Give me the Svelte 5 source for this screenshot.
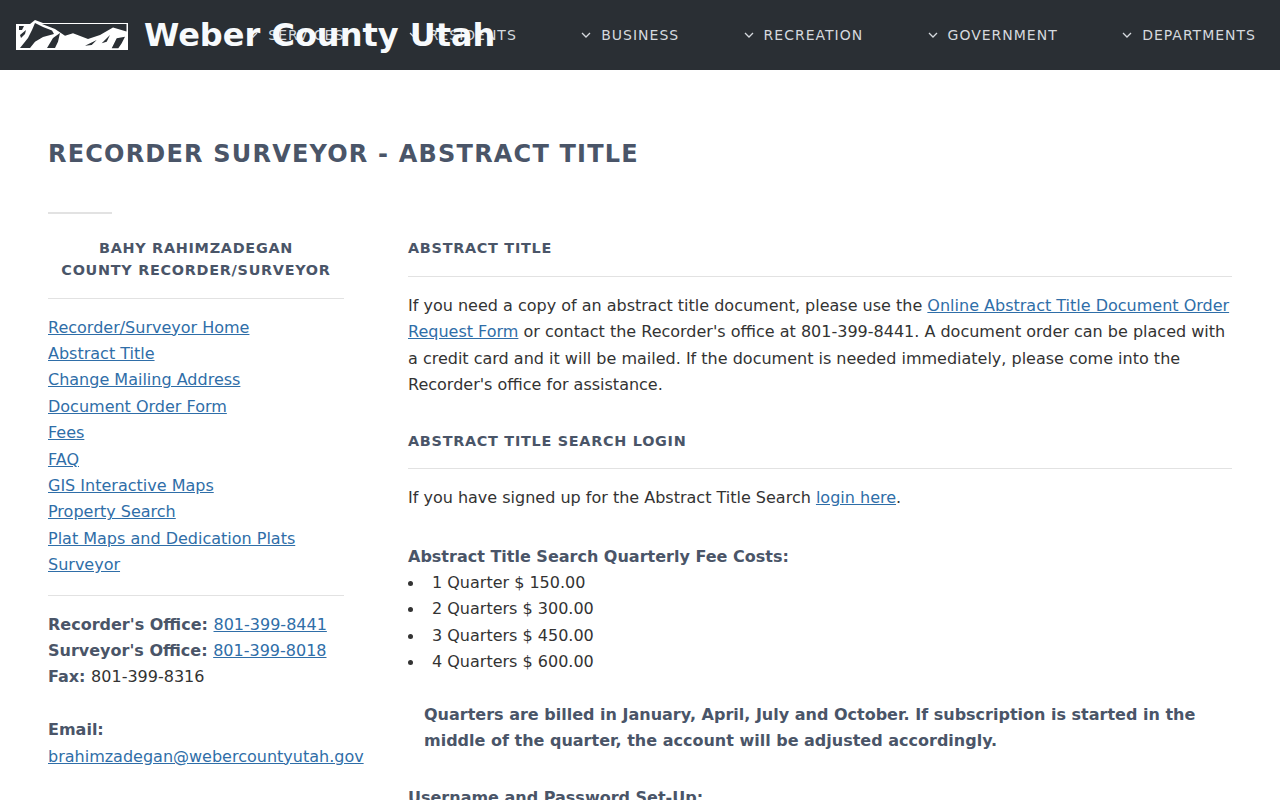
<script>
  const navItems = ["Services", "Residents", "Business", "Recreation", "Government", "Departments"];
  const sideLinks = [
    "Recorder/Surveyor Home",
    "Abstract Title",
    "Change Mailing Address",
    "Document Order Form",
    "Fees",
    "FAQ",
    "GIS Interactive Maps",
    "Property Search",
    "Plat Maps and Dedication Plats",
    "Surveyor"
  ];
  const fees = ["1 Quarter $ 150.00", "2 Quarters $ 300.00", "3 Quarters $ 450.00", "4 Quarters $ 600.00"];
</script>

<header class="topbar">
  <a class="brand" href="#top">
    <svg class="logo" viewBox="0 0 112 30" width="112" height="30" aria-hidden="true">
      <path fill="#fff" d="M0 4H14L19 0L27 3H112V30H0Z" />
      <path fill="#2a2f34" d="M26 4H110.5V11.5L97 7.5L84 15L72 19L57 13.3L49 15.7L39 9Z" />
      <path fill="#2a2f34" d="M4 28L12 18L16 10L19 3L27 7L36 10.5L38 14L27 17L19 21.7L14 28ZM31 28L37 18L44 13L42 21.7L39 28ZM3 6H8L6 10H3ZM4 15L10 10L9 14L5 18ZM69 25.7L80.7 20L75.7 25ZM85.7 23.3L94 15L90.7 21.7ZM95.7 28.3L100.7 18.3L109 16.7L105.7 23.3L102.3 28.3Z" />
    </svg>
    <span class="brand-name">Weber County Utah</span>
  </a>
  <nav class="mainnav">
    {#each navItems as item}
      <a class="navlink" href="#top">
        <svg class="chev" viewBox="0 0 10 6" width="10" height="6" aria-hidden="true">
          <path d="M1 1l4 4 4-4" fill="none" stroke="currentColor" stroke-width="1.3" />
        </svg>
        {item}
      </a>
    {/each}
  </nav>
</header>

<main class="page">
  <h1>Recorder Surveyor - Abstract Title</h1>
  <hr class="short" />

  <div class="columns">
    <aside class="side">
      <h4 class="person">Bahy Rahimzadegan<br />County Recorder/Surveyor</h4>
      <hr class="rule side-top" />
      <ul class="sidelinks">
        {#each sideLinks as link}
          <li><a href="#top">{link}</a></li>
        {/each}
      </ul>
      <hr class="rule side-bottom" />
      <p class="contact">
        <strong>Recorder's Office:</strong> <a href="#top">801-399-8441</a><br />
        <strong>Surveyor's Office:</strong> <a href="#top">801-399-8018</a><br />
        <strong>Fax:</strong> 801-399-8316
      </p>
      <p class="contact">
        <strong>Email:</strong><br />
        <a href="#top">brahimzadegan@webercountyutah.gov</a>
      </p>
    </aside>

    <article class="content">
      <h4>Abstract Title</h4>
      <hr class="rule" />
      <p>If you need a copy of an abstract title document, please use the <a href="#top">Online Abstract Title Document Order Request Form</a> or contact the Recorder's office at 801-399-8441. A document order can be placed with a credit card and it will be mailed. If the document is needed immediately, please come into the Recorder's office for assistance.</p>

      <h4 class="next">Abstract Title Search Login</h4>
      <hr class="rule tight" />
      <p>If you have signed up for the Abstract Title Search <a href="#top">login here</a>.</p>

      <p class="feehead"><strong>Abstract Title Search Quarterly Fee Costs:</strong></p>
      <ul class="fees">
        {#each fees as fee}
          <li>{fee}</li>
        {/each}
      </ul>

      <p class="note">Quarters are billed in January, April, July and October. If subscription is started in the middle of the quarter, the account will be adjusted accordingly.</p>

      <p class="feehead setup"><strong>Username and Password Set-Up:</strong></p>
    </article>
  </div>
</main>

<style>
  :global(body) {
    margin: 0;
    background: #fff;
    color: #333;
    font-family: "DejaVu Sans", sans-serif;
    font-size: 16px;
    line-height: 26.4px;
    overflow: hidden;
  }

  .topbar {
    position: relative;
    height: 70px;
    background: #2a2f34;
    display: flex;
    justify-content: flex-end;
    align-items: center;
    padding-right: 24px;
  }

  /* the title runs over the nav in the original too */
  .brand {
    position: absolute;
    left: 16px;
    top: 0;
    height: 70px;
    display: flex;
    align-items: center;
    gap: 16px;
    color: #f7fafc;
    text-decoration: none;
  }
  .logo {
    display: block;
  }
  .brand-name {
    font-size: 32px;
    font-weight: 700;
    line-height: 70px;
  }

  .mainnav {
    display: flex;
    gap: 64.4px;
  }
  .navlink {
    display: flex;
    align-items: center;
    gap: 10px;
    color: #d5d9de;
    text-decoration: none;
    text-transform: uppercase;
    font-size: 14px;
    letter-spacing: 1px;
  }
  .chev {
    color: #d5d9de;
  }

  .page {
    padding: 0 48px;
  }

  h1 {
    margin: 0;
    padding-top: 67px;
    color: #4a5568;
    font-size: 24px;
    line-height: 34px;
    font-weight: 700;
    letter-spacing: 1.2px;
    text-transform: uppercase;
  }

  hr {
    border: 0;
    margin: 0;
    height: 1px;
    background: #e2e2e2;
  }
  .short {
    width: 64px;
    height: 2px;
    margin-top: 41px;
  }

  .columns {
    display: grid;
    grid-template-columns: 296px 1fr;
    column-gap: 64px;
    margin-top: 23px;
  }

  h4 {
    margin: 0;
    color: #4a5568;
    font-size: 14.4px;
    line-height: 22px;
    font-weight: 700;
    letter-spacing: 0.72px;
    text-transform: uppercase;
  }
  .person {
    text-align: center;
  }

  .rule {
    margin: 17px 0 16px;
  }
  .rule.tight {
    margin: 16.6px 0 15.4px;
  }
  .rule.side-top {
    margin: 17px 0 15.6px;
  }
  .rule.side-bottom {
    margin: 16.8px 0 15.2px;
  }

  a {
    color: #2f6ea8;
  }

  .sidelinks {
    list-style: none;
    margin: 0;
    padding: 0;
  }

  .contact {
    margin: 0 0 26.4px;
    white-space: nowrap;
  }
  .contact strong {
    margin-right: 0.5px;
  }
  strong {
    color: #4a5568;
    font-weight: 700;
  }

  .content p {
    margin: 0;
  }
  .next {
    margin-top: 31px;
  }
  .content .feehead {
    margin-top: 32.6px;
  }
  .fees {
    list-style: none;
    margin: 0;
    padding: 0;
  }
  .fees li {
    display: flex;
    align-items: center;
    gap: 19px;
  }
  .fees li::before {
    content: "";
    width: 5px;
    height: 5px;
    border-radius: 50%;
    background: #333;
  }
  .content .note {
    margin: 26.4px 0 0;
    padding-left: 16px;
    color: #4a5568;
    font-weight: 700;
  }
  .content .setup {
    margin-top: 30px;
  }
</style>
